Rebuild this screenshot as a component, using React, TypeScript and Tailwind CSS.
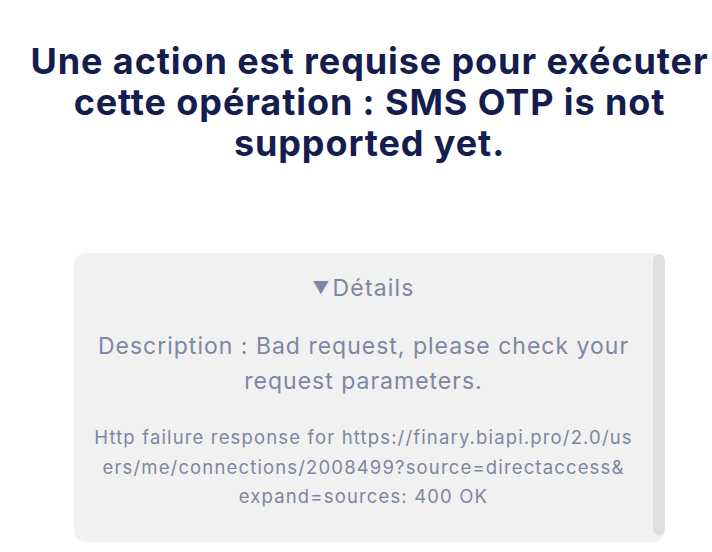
import React from "react";

export default function App() {
  return (
    <div className="w-[712px] h-[552px] bg-white overflow-hidden">
      <div className="pt-[41px] pl-[27px] flex flex-col items-center">
        <h1 className="w-full whitespace-nowrap text-center text-[36px] leading-[41px] font-bold text-[#141d4e] tracking-[0.9px] [font-family:Inter,'Noto_Sans',sans-serif]">
          Une action est requise pour exécuter
          <br />
          cette opération : SMS OTP is not
          <br />
          supported yet.
        </h1>
        <div className="mt-[89px] w-[591px] h-[289px] rounded-[12px] bg-[#f1f1f1] flex flex-row">
          <div className="flex-1 flex flex-col items-center pt-[20px] text-[#7e86a3] whitespace-nowrap [font-family:Inter,'Noto_Sans',sans-serif]">
            <div className="flex items-center gap-[3px] text-[23px] leading-[30px] tracking-[1.2px]">
              <span className="text-[17px] leading-[30px] tracking-normal">▼</span>
              <span>Détails</span>
            </div>
            <div className="mt-[26px] text-center text-[23px] leading-[35px] tracking-[1px]">
              Description : Bad request, please check your
              <br />
              request parameters.
            </div>
            <div className="mt-[24px] text-center text-[18.5px] leading-[29.5px] tracking-[1.15px]">
              Http failure response for https://finary.biapi.pro/2.0/us
              <br />
              ers/me/connections/2008499?source=directaccess&amp;
              <br />
              expand=sources: 400 OK
            </div>
          </div>
          <div className="w-[12px] pt-[1px] pb-[7px] flex">
            <div className="w-full h-full rounded-[6px] bg-[#dfdfdf]" />
          </div>
        </div>
      </div>
    </div>
  );
}
